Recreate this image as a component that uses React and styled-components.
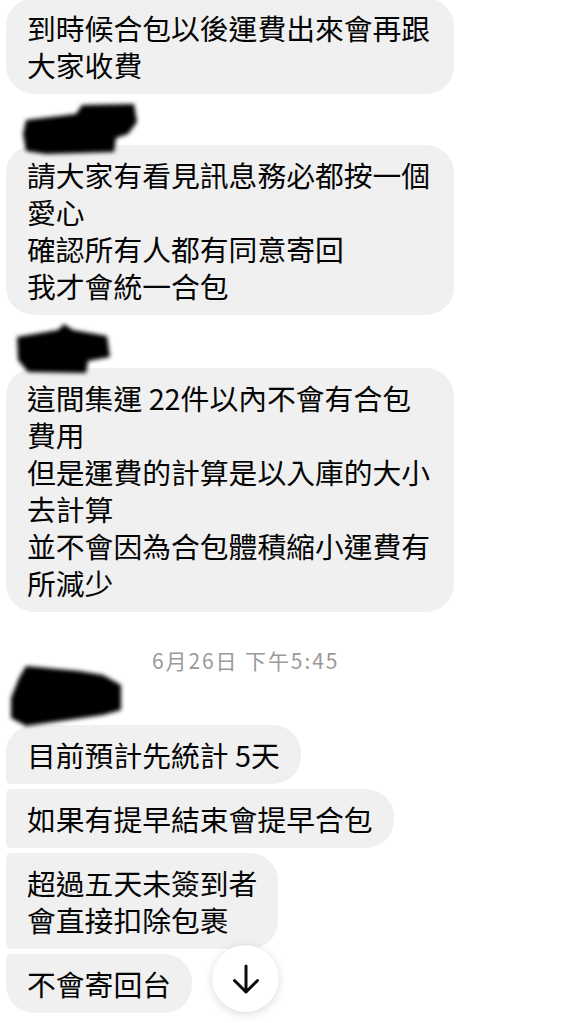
import React from 'react'
import styled, { createGlobalStyle } from 'styled-components'

const GlobalStyle = createGlobalStyle`
  html, body {
    margin: 0;
    padding: 0;
    background: #ffffff;
  }
  body {
    height: 1023px;
    overflow: hidden;
    font-family: "Noto Sans CJK TC", "Noto Sans", sans-serif;
  }
`

const BIG = 28
const SMALL = 5

const radiusFor = (pos) => {
  switch (pos) {
    case 'first':
      return `${BIG}px ${BIG}px ${BIG}px ${SMALL}px`
    case 'middle':
      return `${SMALL}px ${BIG}px ${BIG}px ${SMALL}px`
    case 'last':
      return `${SMALL}px ${BIG}px ${BIG}px ${BIG}px`
    default:
      return `${BIG}px`
  }
}

// redacted sender names, coordinates relative to the label row
const scribbles = {
  one: 'M20 26 L70 20 L76 11 L128 10 L131 28 L122 40 L110 44 L108 58 L40 60 L20 57 L17 40 Z',
  two: 'M11 22 L52 15 L58 9 L67 15 L101 21 L104 42 L82 46 L80 58 L22 57 L12 45 Z',
  three: 'M20 -8 L73 -3 L97 1 L115 11 L115 36 L97 41 L20 52 L5 44 L5 24 L13 4 Z',
}

function Scribble({ shape }) {
  return (
    <ScribbleSvg width="140" height="90" viewBox="0 -20 140 90">
      <defs>
        <filter id={`blur-${shape}`} x="-20%" y="-20%" width="140%" height="140%">
          <feGaussianBlur stdDeviation="2.2" />
        </filter>
      </defs>
      <path d={scribbles[shape]} fill="#050505" filter={`url(#blur-${shape})`} />
    </ScribbleSvg>
  )
}

function ArrowDownIcon() {
  return (
    <svg width="30" height="30" viewBox="0 0 30 30" fill="none">
      <path d="M15 2v26M3.5 16.5 15 28l11.5-11.5" stroke="#0a0a0a" strokeWidth="3" strokeLinecap="round" strokeLinejoin="round" />
    </svg>
  )
}

export default function App() {
  return (
    <>
      <GlobalStyle />
      <Thread>
        <Group>
          <Bubble $pos="single">{'到時候合包以後運費出來會再跟大家收費'}</Bubble>
        </Group>

        <SenderLabel>
          <Scribble shape="one" />
        </SenderLabel>
        <Group>
          <Bubble $pos="single">{'請大家有看見訊息務必都按一個愛心\n確認所有人都有同意寄回\n我才會統一合包'}</Bubble>
        </Group>

        <SenderLabel $tall>
          <Scribble shape="two" />
        </SenderLabel>
        <Group>
          <Bubble $pos="single">{'這間集運 22件以內不會有合包費用\n但是運費的計算是以入庫的大小去計算\n並不會因為合包體積縮小運費有所減少'}</Bubble>
        </Group>

        <Timestamp>6月26日 下午5:45</Timestamp>

        <SenderLabel>
          <Scribble shape="three" />
        </SenderLabel>
        <Group>
          <Bubble $pos="first">{'目前預計先統計 5天'}</Bubble>
          <Bubble $pos="middle">{'如果有提早結束會提早合包'}</Bubble>
          <Bubble $pos="middle">{'超過五天未簽到者\n會直接扣除包裹'}</Bubble>
          <Bubble $pos="last">{'不會寄回台'}</Bubble>
        </Group>
      </Thread>

      <ScrollButton aria-label="scroll to bottom">
        <ArrowDownIcon />
      </ScrollButton>
    </>
  )
}

const Thread = styled.div`
  display: flex;
  flex-direction: column;
  padding: 0 6px;
  margin-top: -2px;
`

const Group = styled.div`
  display: flex;
  flex-direction: column;
  align-items: flex-start;
  gap: 5px;
`

const Bubble = styled.div`
  box-sizing: border-box;
  max-width: 448px;
  padding: 11px 21px;
  background: #f0f0f0;
  color: #050505;
  font-size: 28.8px;
  line-height: 37px;
  white-space: pre-line;
  border-radius: ${(p) => radiusFor(p.$pos)};
`

const SenderLabel = styled.div`
  position: relative;
  height: ${(p) => (p.$tall ? '53px' : '51px')};
  z-index: 1;
`

const ScribbleSvg = styled.svg`
  position: absolute;
  top: -20px;
  left: 0;
  pointer-events: none;
`

const Timestamp = styled.div`
  margin-top: 34px;
  padding-left: 146px;
  height: 28px;
  line-height: 28px;
  font-size: 21px;
  letter-spacing: 1.9px;
  color: #9a9a9a;
`

const ScrollButton = styled.button`
  position: fixed;
  left: 212px;
  top: 945px;
  width: 67px;
  height: 67px;
  border: none;
  border-radius: 50%;
  background: #ffffff;
  box-shadow: 0 2px 10px rgba(0, 0, 0, 0.14), 0 0 2px rgba(0, 0, 0, 0.06);
  display: flex;
  align-items: center;
  justify-content: center;
  padding: 0;
  cursor: pointer;
`
